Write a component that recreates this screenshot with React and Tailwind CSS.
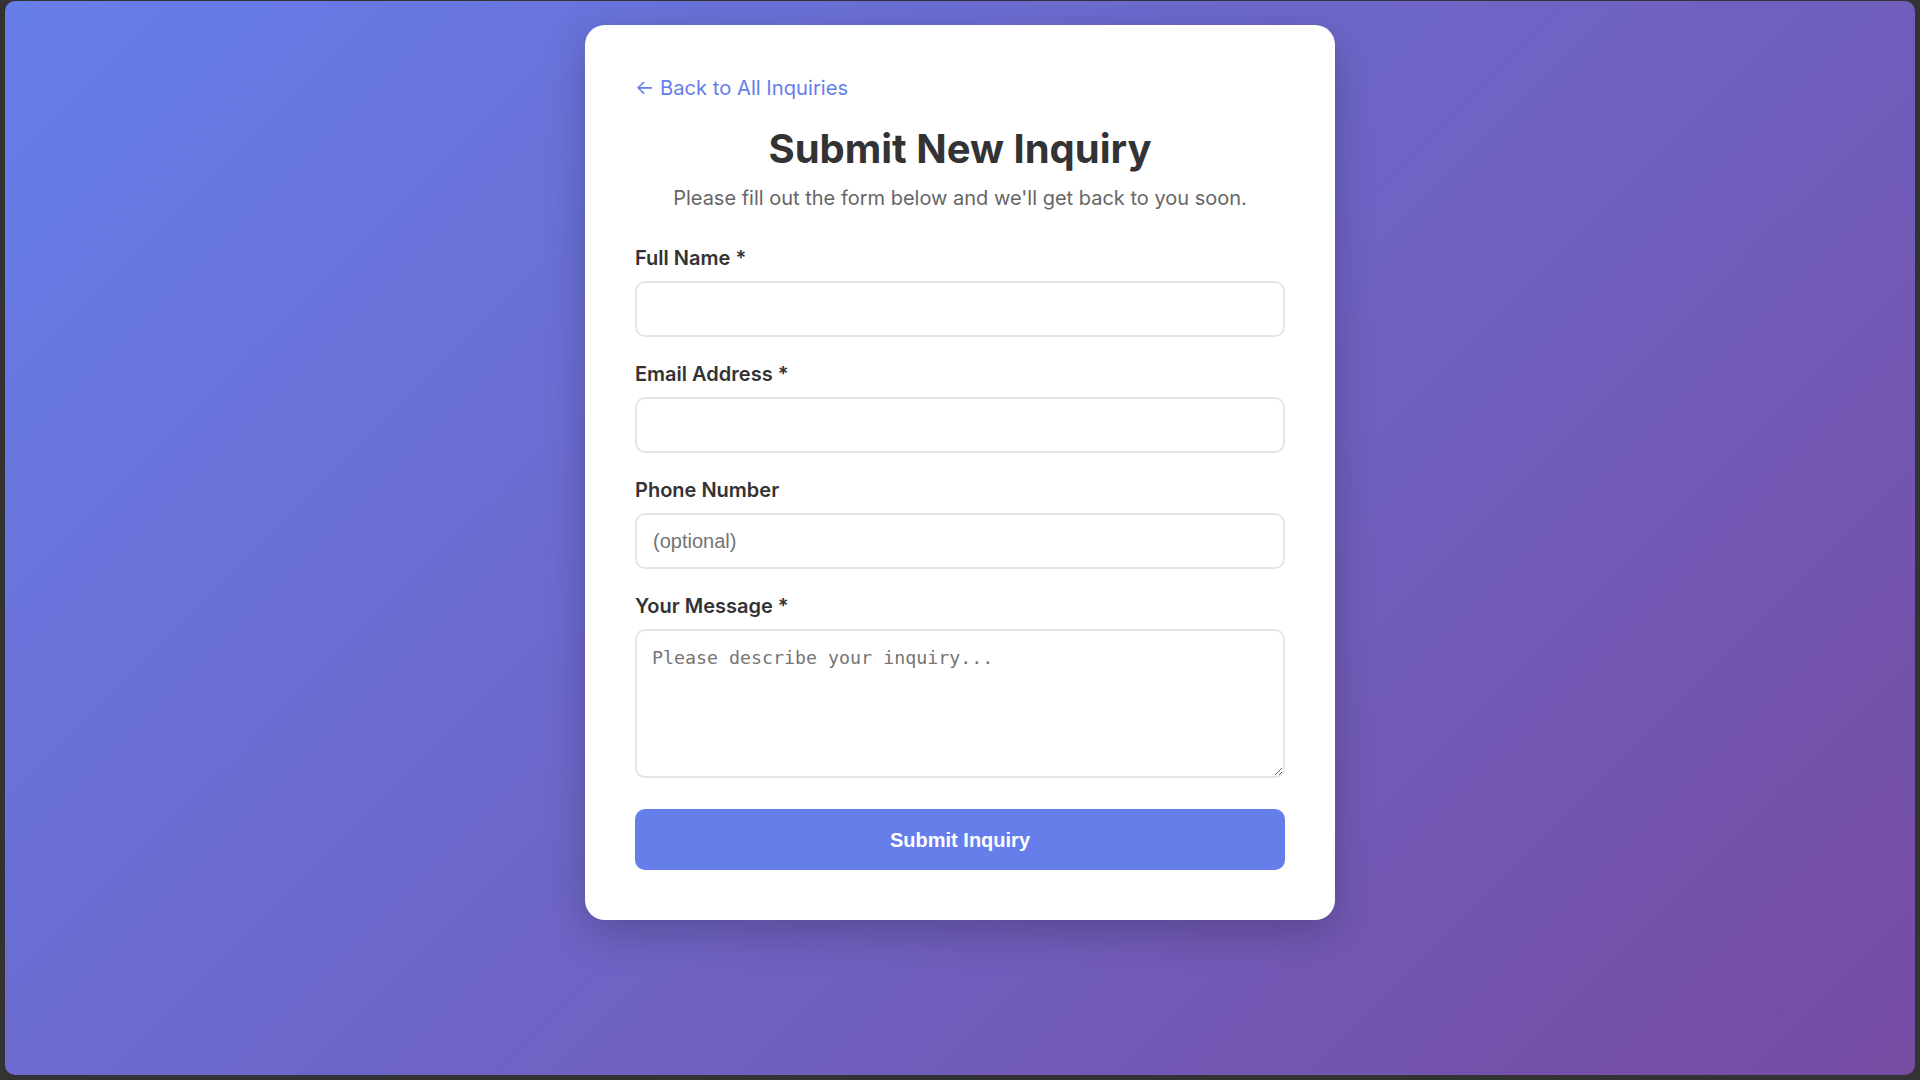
import React from "react";

const labelCls =
  "mb-[10px] block text-[20px] font-semibold leading-[25px] text-[#333333]";
const inputCls =
  "box-border block h-[56px] w-full rounded-[10px] border-2 border-[#e2e5ea] bg-white px-[16px] font-['Liberation_Sans',Arial,sans-serif] text-[20px] text-[#333] outline-none placeholder:text-[#757575]";

export default function App() {
  return (
    <div className="h-screen w-full bg-[#333333] pl-[5px] pr-[5px] pt-[1px] pb-[5px]">
      <div className="h-full w-full rounded-[10px] bg-[linear-gradient(135deg,#667eea_0%,#764ba2_100%)] pt-[24px] font-['Inter',sans-serif]">
        <div className="mx-auto w-[750px] rounded-[20px] bg-white p-[50px] shadow-[0_12px_40px_rgba(0,0,0,0.22)]">
          <a href="#" className="block text-[20.2px] leading-[25px] text-[#667eea] no-underline">
            ← Back to All Inquiries
          </a>
          <h1 className="mt-[25px] mb-[11px] text-center text-[40px] font-bold leading-[48px] text-[#333333]">
            Submit New Inquiry
          </h1>
          <p className="mb-[34px] text-center text-[20px] leading-[28px] text-[#666666]">
            Please fill out the form below and we'll get back to you soon.
          </p>

          <div className="mb-[25px]">
            <label className={labelCls}>Full Name *</label>
            <input type="text" className={inputCls} />
          </div>

          <div className="mb-[25px]">
            <label className={labelCls}>Email Address *</label>
            <input type="email" className={inputCls} />
          </div>

          <div className="mb-[25px]">
            <label className={labelCls}>Phone Number</label>
            <input type="tel" placeholder="(optional)" className={inputCls} />
          </div>

          <div>
            <label className={labelCls}>Your Message *</label>
            <textarea
              placeholder="Please describe your inquiry..."
              className="box-border block h-[149px] w-full resize-y rounded-[10px] border-2 border-[#e2e5ea] bg-white px-[15px] py-[16px] font-['DejaVu_Sans_Mono',monospace] text-[18.3px] leading-[21px] text-[#333] outline-none placeholder:text-[#757575]"
            />
          </div>

          <button
            type="submit"
            className="mt-[31px] block h-[61px] w-full cursor-pointer rounded-[10px] border-0 bg-[#667eea] font-['Liberation_Sans',Arial,sans-serif] text-[20px] font-bold text-white"
          >
            Submit Inquiry
          </button>
        </div>
      </div>
    </div>
  );
}
